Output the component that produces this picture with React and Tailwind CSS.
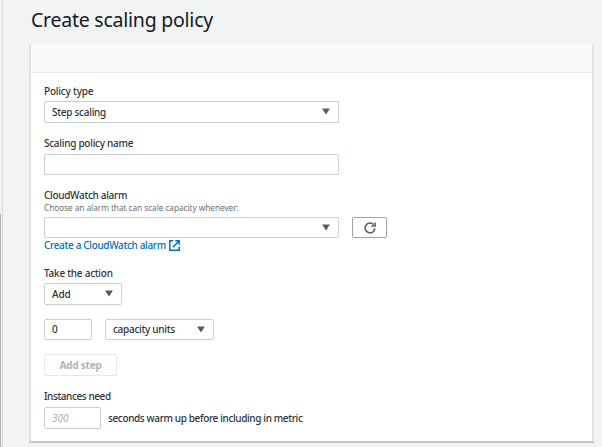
import React from "react";

function Caret() {
  return (
    <svg className="shrink-0" width="8" height="7" viewBox="0 0 8 7">
      <path d="M0.1 0.4h7.8L4 6.6z" fill="#545b64" />
    </svg>
  );
}

function Select({ className, children }) {
  return (
    <div className={`flex items-center justify-between rounded-[2px] border border-[#c9d2d3] bg-white pr-2 pb-px pl-[7px] ${className}`}>
      <span>{children}</span>
      <Caret />
    </div>
  );
}

function Label({ children, className }) {
  return <div className={`flex h-4 items-center ${className}`}>{children}</div>;
}

export default function App() {
  return (
    <div className="flex h-[447px] w-[602px] overflow-hidden bg-[#f2f4f4] font-['Noto_Sans','Open_Sans',sans-serif] text-[10px] leading-4 font-medium whitespace-nowrap text-[#2f3338]">
      <div className="flex w-[3px] shrink-0 border-r border-[#d5d9d9] bg-[#f1f1f1]">
        <div className="mt-[214px] w-px bg-[#b5b5b5]" />
      </div>
      <div className="ml-[26px] w-[565px]">
        <h1 className="flex h-[45px] items-center pb-[5px] pl-[2px] text-[19.5px] leading-6 font-normal text-[#16191f]">
          <span className="tracking-[-0.24px]">Create scaling policy</span>
        </h1>
        <div className="h-[398px] border-b-2 border-[#c1c8c9]">
          <div className="h-full border-x-2 border-[#dfe2e2] bg-white">
            <div className="h-7 border-b border-[#eaeded] bg-[#fafafa]" />
            <div className="flex flex-col items-start pl-[13px] pt-[10px]">
              <Label className="tracking-[-0.2px]">Policy type</Label>
              <Select className="mt-[2px] h-[22px] w-[295px] tracking-[-0.27px]">Step scaling</Select>
              <Label className="mt-3 tracking-[-0.27px]">Scaling policy name</Label>
              <div className="mt-[3px] h-[21px] w-[295px] rounded-[2px] border border-[#c9d2d3] bg-white" />
              <Label className="mt-3 tracking-[-0.31px]">CloudWatch alarm</Label>
              <div className="flex h-[10px] items-center text-[8.25px] font-normal tracking-[-0.04px] text-[#687078]">Choose an alarm that can scale capacity whenever:</div>
              <div className="mt-[4px] flex gap-[13px]">
                <Select className="h-[21px] w-[295px]" />
                <div className="flex h-[21px] w-[35px] items-center justify-center rounded-[2px] border border-[#9da3a9]">
                  <svg width="12" height="12" viewBox="0 0 12 12" fill="none" stroke="#545b64" strokeWidth="1.5">
                    <path d="M9.6 2.6A4.9 4.9 0 1 0 10.9 6.4" />
                    <path d="M11.1 0.4V4H7.4" />
                  </svg>
                </div>
              </div>
              <div className="flex h-[14px] items-center gap-[3px] tracking-[-0.34px] text-[#0073bb]">
                <span>Create a CloudWatch alarm</span>
                <svg width="11" height="11" viewBox="0 0 11 11" fill="none" stroke="#0073bb" strokeWidth="1.5">
                  <path d="M4.2 0.8H0.8v9.4h9.4V6.8M6.3 0.8h3.9v3.9M10 1L3.8 7.2" />
                </svg>
              </div>
              <Label className="mt-[13px] tracking-[-0.25px]">Take the action</Label>
              <Select className="mt-[2px] h-[22px] w-[78px] tracking-[-0.1px]">Add</Select>
              <div className="mt-[14px] flex gap-[13px]">
                <div className="flex h-[21px] w-[48px] items-center rounded-[2px] border border-[#c9d2d3] pb-px pl-[7px]">0</div>
                <Select className="h-[21px] w-[109px] tracking-[-0.29px]">capacity units</Select>
              </div>
              <div className="mt-[14px] flex h-[22px] w-[73px] items-center justify-center rounded-[2px] border border-[#e4e8e8] pb-px font-bold tracking-[-0.2px] text-[#aab7b8]">Add step</div>
              <Label className="mt-3 tracking-[-0.42px]">Instances need</Label>
              <div className="mt-[3px] flex items-center gap-[7px]">
                <div className="flex h-[22px] w-[57px] items-center rounded-[2px] border border-[#c9d2d3] pl-[7px] font-normal italic text-[#a3adaf]">300</div>
                <span className="tracking-[-0.37px]">seconds warm up before including in metric</span>
              </div>
            </div>
          </div>
        </div>
      </div>
    </div>
  );
}
